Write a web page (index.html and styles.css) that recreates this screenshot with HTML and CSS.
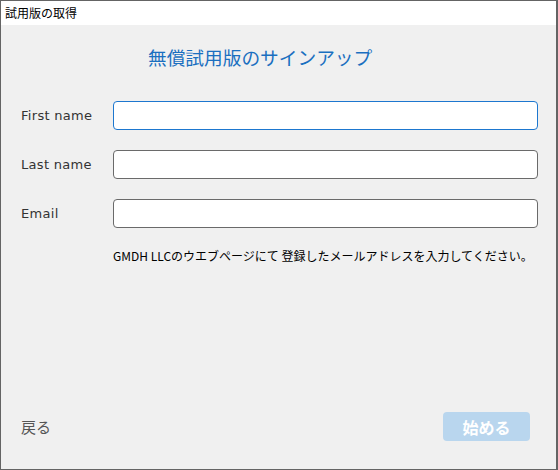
FILE: index.html
```html
<!DOCTYPE html>
<html lang="ja">
  <head>
    <meta charset="UTF-8" />
    <meta name="viewport" content="width=device-width, initial-scale=1.0" />
    <title>試用版の取得</title>
    <link rel="stylesheet" href="styles.css">
  </head>
  <body>
    <div class="window">
      <div class="titlebar">試用版の取得</div>
      <div class="content">
        <h1 class="headline">無償試用版のサインアップ</h1>
        <form class="signup">
          <label class="field-label" for="firstName">First name</label>
          <input class="field focused" type="text" id="firstName" />
          <label class="field-label" for="lastName">Last name</label>
          <input class="field" type="text" id="lastName" />
          <label class="field-label" for="email">Email</label>
          <input class="field" type="text" id="email" />
        </form>
        <p class="note">GMDH LLCのウエブページにて 登録したメールアドレスを入力してください。</p>
      </div>
      <div class="footer">
        <span class="back">戻る</span>
        <button type="button" class="btn" disabled>始める</button>
      </div>
    </div>
  </body>
</html>
```

FILE: styles.css
```css
body {
  margin: 0;
  padding: 0;
  font-family: "Noto Sans CJK JP", "DejaVu Sans", sans-serif;
}

.window {
  width: 558px;
  height: 470px;
  box-sizing: border-box;
  border: 1px solid #646464;
  border-right-width: 2px;
  background-color: #f0f0f0;
  display: flex;
  flex-direction: column;
}

.titlebar {
  height: 24px;
  background-color: #ffffff;
  font-size: 12px;
  line-height: 24px;
  padding-left: 4px;
  color: #000000;
}

.content {
  flex: 1;
  display: flex;
  flex-direction: column;
}

.headline {
  margin: 20px 0 0 147px;
  font-size: 18.7px;
  line-height: 24px;
  font-weight: normal;
  color: #1a6fc0;
}

.signup {
  margin: 32px 0 0 20px;
  display: grid;
  grid-template-columns: 92px 425px;
  row-gap: 20px;
  align-items: center;
}

.field-label {
  font-family: "DejaVu Sans", sans-serif;
  font-size: 13px;
  letter-spacing: 0.3px;
  color: #333333;
}

.field {
  height: 29px;
  box-sizing: border-box;
  border: 1px solid #6a6a6a;
  border-radius: 4px;
  background-color: #ffffff;
  outline: none;
}

.field.focused {
  border-color: #1d77cf;
}

.note {
  margin: 20px 0 0 112px;
  font-size: 12px;
  line-height: 16px;
  color: #000000;
}

.footer {
  display: flex;
  justify-content: space-between;
  align-items: center;
  padding: 0 26px 28px 20px;
}

.back {
  font-size: 15px;
  color: #555555;
}

.btn {
  width: 87px;
  height: 29px;
  border: none;
  border-radius: 4px;
  background-color: #b9d6ee;
  color: #ffffff;
  font-family: "Noto Sans CJK JP", sans-serif;
  font-size: 16px;
  font-weight: bold;
}
```
